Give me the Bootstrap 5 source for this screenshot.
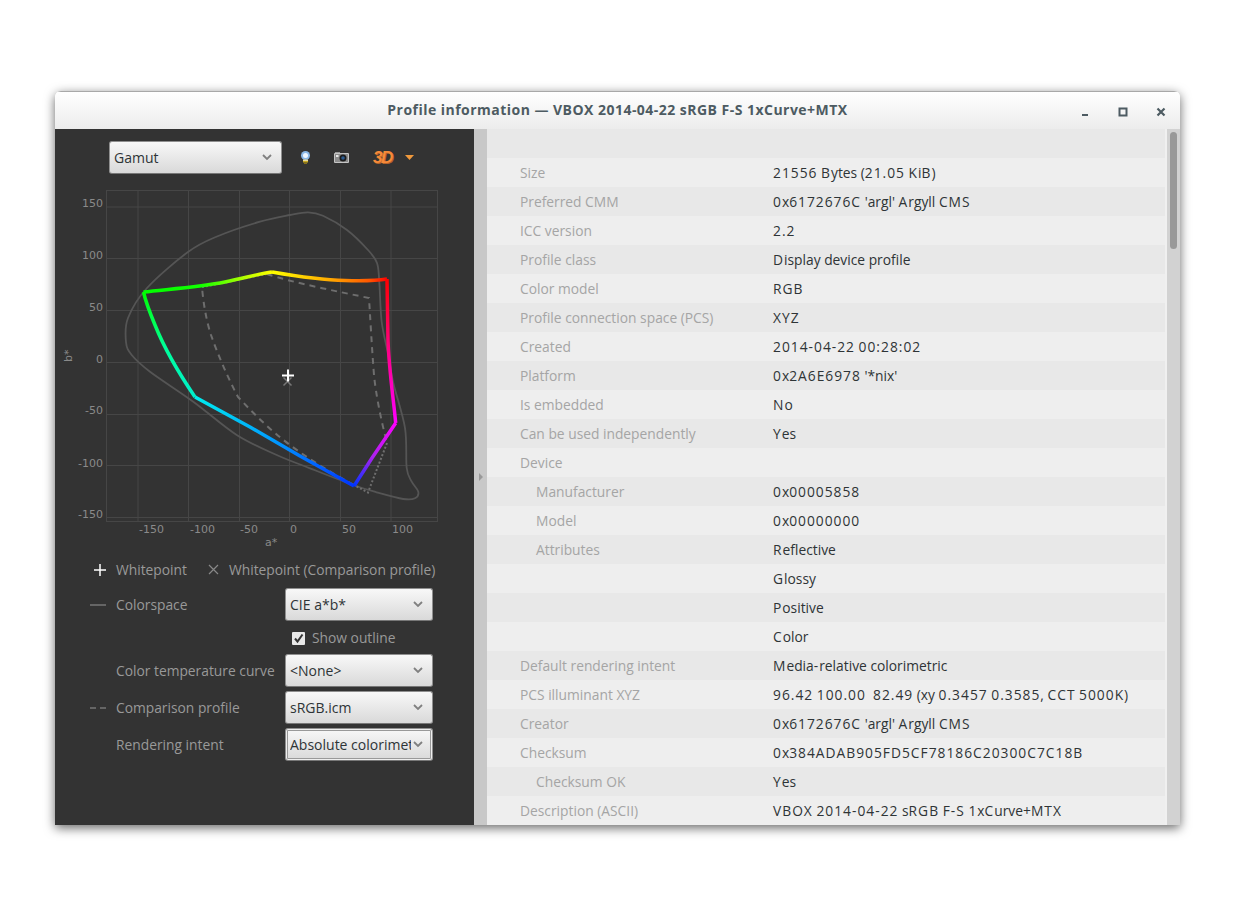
<!DOCTYPE html>
<html lang="en">
<head>
  <meta charset="UTF-8">
  <title>Profile information</title>
  <link href="https://cdn.jsdelivr.net/npm/bootstrap@5.3.3/dist/css/bootstrap.min.css" rel="stylesheet">
  <style>
    body { background: #fff; font-family: "Open Sans", "Noto Sans", sans-serif; font-size: 13.8px; }
    .page-wrap { padding: 91px 56px 60px 55px; }
    .app-window { height: 734px; border-radius: 6px 6px 0 0; overflow: hidden; box-shadow: 0 3px 11px rgba(0,0,0,.6); }
    .title-bar { height: 38px; padding-bottom: 2px; background: linear-gradient(#fff, #ececec); border-top: 1px solid #a8a8a8; color: #4d5b62; font-size: 14px; font-weight: 700; letter-spacing: .47px; }
    .win-btns { width: 114px; padding-top: 2px; }
    .win-btn { width: 38px; }
    .left-panel { width: 419px; background: #333; color: #999; }
    .tool-row { height: 56px; padding: 12px 0 0 54px; }
    .tool-inner { height: 33px; }
    .gtk-select { height: 33px; padding: 0 26px 0 4px; font-size: 14px; color: #2e3436; border: 1px solid #8f8f8f; border-bottom-color: #777; border-radius: 3px;
      background-color: #e8e8e8; background-size: 10px 7px, 100% 100%; background-position: right 9px center, 0 0;
      background-image: url("data:image/svg+xml,%3Csvg xmlns='http://www.w3.org/2000/svg' viewBox='0 0 10 7'%3E%3Cpath d='M1 1l4 4 4-4' fill='none' stroke='%23808080' stroke-width='1.8'/%3E%3C/svg%3E"), linear-gradient(#f8f8f8, #d9d9d9); }
    .gtk-select.focused { padding-right: 21px; box-shadow: inset 0 0 0 1px #eee, inset 0 0 0 2px #999; }
    .gamut-select { width: 173px; }
    .bulb-icon { margin-left: 18px; }
    .cam-icon { margin-left: 23px; }
    .three-d { width: 16px; margin-left: 24px; font: italic 700 17px/1 "Liberation Sans", sans-serif; letter-spacing: -1.5px; color: #f58a3a; text-shadow: 1px 1px 0 #b5622a; white-space: nowrap; }
    .drop-arrow { margin-left: 16px; }
    .plot-svg { display: block; }
    .plot-svg text { font-family: "DejaVu Sans", sans-serif; font-size: 11px; fill: #8a8a8a; }
    .legend-row { padding: 0 0 3px 35px; height: 33px; }
    .mark-gap { margin-left: 20px; }
    .option-grid { display: grid; grid-template-columns: 26px 169px 148px; margin-left: 35px; row-gap: 4px; align-items: center; }
    .opt-label { padding-top: 2px; }
    .show-outline { min-height: 25px; padding: 1px 0 0 7px; gap: 7px; }
    .splitter { width: 13px; background: #c8c8c8; }
    .info-pane { background: #f0f0f0; }
    .info-table { width: 678px; margin: 0; table-layout: fixed; }
    .info-table td { height: 29px; padding: 2px 0 0; border: 0; white-space: pre; }
    .info-table tr:nth-child(odd) td { background: #e8e8e8; }
    .info-table tr:nth-child(even) td { background: #eee; }
    .cell-name { width: 286px; padding-left: 33px !important; color: #a5a5a5; }
    .cell-name.sub { padding-left: 49px !important; }
    .cell-val { color: #2e3436; }
    .wide-run { letter-spacing: 1px; }
    .scroll-track { width: 13px; background: #d2d2d2; margin-left: 2px; padding: 3px 3px; }
    .scroll-thumb { height: 117px; background: #999; border-radius: 4px; }
  </style>
</head>
<body>
  <div class="page-wrap">
    <div class="app-window d-flex flex-column">
      <div class="title-bar d-flex align-items-center flex-shrink-0">
        <div class="win-btns flex-shrink-0"></div>
        <div class="flex-grow-1 text-center">Profile information — VBOX 2014-04-22 sRGB F-S 1xCurve+MTX</div>
        <div class="win-btns d-flex flex-shrink-0">
          <div class="win-btn text-center"><svg width="10" height="10" viewBox="0 0 10 10"><path d="M2 8h6" stroke="#4d5b62" stroke-width="2"/></svg></div>
          <div class="win-btn text-center"><svg width="10" height="10" viewBox="0 0 10 10"><rect x="1.5" y="1.5" width="7" height="7" fill="none" stroke="#4d5b62" stroke-width="2"/></svg></div>
          <div class="win-btn text-center"><svg width="10" height="10" viewBox="0 0 10 10"><path d="M1.5 1.5l7 7M8.500 1.5l-7 7" stroke="#4d5b62" stroke-width="2.200"/></svg></div>
        </div>
      </div>
      <div class="d-flex flex-grow-1 overflow-hidden">
        <!-- Left: gamut plot and options -->
        <div class="left-panel flex-shrink-0">
          <div class="tool-row">
            <div class="tool-inner d-flex align-items-center">
              <select class="form-select gtk-select gamut-select flex-shrink-0"><option>Gamut</option></select>
              <svg class="bulb-icon flex-shrink-0" width="11" height="13" viewBox="0 0 11 13">
                <circle cx="5.500" cy="4.500" r="4.500" fill="#8ab8e8"/>
                <circle cx="5.500" cy="4.500" r="2.500" fill="#eef6ff"/>
                <rect x="3" y="8.500" width="5" height="1.500" fill="#e8dca0"/>
                <rect x="3" y="10" width="5" height="1.500" fill="#c8a820"/>
                <rect x="4" y="11.500" width="3" height="1.500" fill="#8a7418"/>
              </svg>
              <svg class="cam-icon flex-shrink-0" width="15" height="11" viewBox="0 0 15 11">
                <rect x="1" y="0" width="5" height="2" fill="#999"/>
                <rect x="0" y="1" width="15" height="10" rx="1" fill="#c4c4c4"/>
                <rect x="1" y="2" width="13" height="8" fill="#8c8c8c"/>
                <circle cx="9" cy="6" r="3.500" fill="#1c1c1c"/>
                <circle cx="9" cy="6" r="1.800" fill="#2a5a90"/>
                <rect x="2" y="3" width="2.500" height="2" fill="#e8e8e8"/>
              </svg>
              <span class="three-d flex-shrink-0">3D</span>
              <svg class="drop-arrow flex-shrink-0" width="9" height="5" viewBox="0 0 9 5"><path d="M0 0h9L4.500 5z" fill="#f0993c"/></svg>
            </div>
          </div>
          <svg class="plot-svg" width="419" height="370" viewBox="55 185 419 370">
            <defs>
              <linearGradient id="gY" gradientUnits="userSpaceOnUse" x1="143" y1="292" x2="272" y2="272"><stop offset="0" stop-color="#0f0"/><stop offset=".45" stop-color="#1f0"/><stop offset=".8" stop-color="#bf0"/><stop offset="1" stop-color="#ff0"/></linearGradient>
              <linearGradient id="yR" gradientUnits="userSpaceOnUse" x1="272" y1="272" x2="387" y2="279"><stop offset="0" stop-color="#ff0"/><stop offset=".5" stop-color="#fa0"/><stop offset=".85" stop-color="#f50"/><stop offset="1" stop-color="#f00"/></linearGradient>
              <linearGradient id="rM" gradientUnits="userSpaceOnUse" x1="387" y1="279" x2="396" y2="423"><stop offset="0" stop-color="#f00"/><stop offset=".5" stop-color="#f08"/><stop offset="1" stop-color="#f0f"/></linearGradient>
              <linearGradient id="mB" gradientUnits="userSpaceOnUse" x1="396" y1="423" x2="354" y2="486"><stop offset="0" stop-color="#f0f"/><stop offset=".55" stop-color="#a2e"/><stop offset="1" stop-color="#03f"/></linearGradient>
              <linearGradient id="bC" gradientUnits="userSpaceOnUse" x1="354" y1="486" x2="195" y2="397"><stop offset="0" stop-color="#03f"/><stop offset=".5" stop-color="#09f"/><stop offset="1" stop-color="#0ee"/></linearGradient>
              <linearGradient id="cG" gradientUnits="userSpaceOnUse" x1="195" y1="397" x2="143" y2="292"><stop offset="0" stop-color="#0ec"/><stop offset=".5" stop-color="#0f9"/><stop offset="1" stop-color="#0f0"/></linearGradient>
            </defs>
            <g stroke="#464646" stroke-width="1" fill="none">
              <rect x="106.500" y="190.500" width="331" height="331"/>
              <path d="M138 190v331M188.500 190v331M239.500 190v331M289.500 190v331M340.500 190v331M391 190v331"/>
              <path d="M106 207h332M106 258.500h332M106 310.500h332M106 362.500h332M106 414.500h332M106 465.500h332M106 517.500h332"/>
            </g>
            <g text-anchor="end">
              <text x="103" y="207">150</text><text x="103" y="259">100</text><text x="103" y="311">50</text>
              <text x="103" y="363">0</text><text x="103" y="414">-50</text><text x="103" y="467">-100</text><text x="103" y="518">-150</text>
            </g>
            <g>
              <text x="139" y="533">-150</text><text x="190" y="533">-100</text><text x="240" y="533">-50</text>
              <text x="290" y="533">0</text><text x="342" y="533">50</text><text x="392" y="533">100</text>
              <text x="265" y="546">a*</text>
              <text transform="translate(72 362) rotate(-90)">b*</text>
            </g>
            <path id="outline" fill="none" stroke="#555" stroke-width="1.800"/>
            <g fill="none" stroke="#6e6e6e" stroke-width="2">
              <path stroke-dasharray="6 5" d="M267 274C290 282 340 292 369 298C371 330 372 350 374 375C376 395 381 420 387 443"/>
              <path stroke-dasharray="2 2" d="M387 443L368 492.500L354 485"/>
              <path stroke-dasharray="6 5" d="M354 485C330 472 310 460 290 445C270 430 255 415 238 397C228 378 218 355 211 335C206 320 203 300 202 287"/>
              <path stroke-dasharray="2 2" d="M202 287C225 283 250 277 267 274"/>
            </g>
            <g fill="none" stroke-width="3.500" stroke-linejoin="round">
              <path stroke="url(#gY)" d="M143.500 292C170 289 200 287 225 282C245 278 258 274 272 272"/>
              <path stroke="url(#yR)" d="M272 272C295 276 320 280 345 280.500C362 281 375 281 387 279"/>
              <path stroke="url(#rM)" d="M387 279L388 340C389 370 393 395 395.700 423"/>
              <path stroke="url(#mB)" d="M395.700 423L372 458L354 486"/>
              <path stroke="url(#bC)" d="M354 486L300 456L250 427L195 397"/>
              <path stroke="url(#cG)" d="M195 397C178 372 163 345 155 325C150 313 146 303 143.500 292"/>
            </g>
            <path d="M283.500 377.500l8 8M291.500 377.500l-8 8" stroke="#777" stroke-width="1.500"/>
            <path d="M282 375.500h12M288 369.500v12" stroke="#fff" stroke-width="2"/>
          </svg>
          <div class="legend-row d-flex align-items-center">
            <svg class="me-2" width="18" height="14" viewBox="0 0 18 14"><path d="M4 7h12M10 1v12" stroke="#fff" stroke-width="1.500"/></svg>
            <span>Whitepoint</span>
            <svg class="mark-gap me-2" width="14" height="14" viewBox="0 0 14 14"><path d="M2 2l9 9M11 2l-9 9" stroke="#888" stroke-width="1.200"/></svg>
            <span>Whitepoint (Comparison profile)</span>
          </div>
          <div class="option-grid">
            <svg width="16" height="4" viewBox="0 0 16 4"><path d="M0 2h16" stroke="#777" stroke-width="1.500"/></svg>
            <span class="opt-label">Colorspace</span>
            <select class="form-select gtk-select"><option>CIE a*b*</option></select>

            <span></span><span></span>
            <div class="show-outline d-flex align-items-center">
              <svg width="13" height="13" viewBox="0 0 13 13"><rect width="13" height="13" rx="1" fill="#e8e8e8"/><path d="M3 6.500l2.500 3 5-7" fill="none" stroke="#333" stroke-width="2"/></svg>
              <span>Show outline</span>
            </div>

            <span></span>
            <span class="opt-label">Color temperature curve</span>
            <select class="form-select gtk-select"><option>&lt;None&gt;</option></select>

            <svg width="16" height="4" viewBox="0 0 16 4"><path d="M0 2h6M10 2h6" stroke="#777" stroke-width="1.500"/></svg>
            <span class="opt-label">Comparison profile</span>
            <select class="form-select gtk-select"><option>sRGB.icm</option></select>

            <span></span>
            <span class="opt-label">Rendering intent</span>
            <select class="form-select gtk-select focused"><option>Absolute colorimetric</option></select>
          </div>
        </div>
        <div class="splitter flex-shrink-0 d-flex align-items-center justify-content-end pe-1">
          <svg width="4" height="8" viewBox="0 0 4 8"><path d="M0 0l4 4-4 4z" fill="#999"/></svg>
        </div>
        <!-- Right: profile details -->
        <div class="info-pane flex-grow-1 d-flex overflow-hidden">
          <table class="info-table flex-shrink-0">
            <tbody id="info-rows"></tbody>
          </table>
          <div class="scroll-track flex-shrink-0"><div class="scroll-thumb"></div></div>
        </div>
      </div>
    </div>
  </div>
  <script>
    // name, value, indented
    const rows = [
      ["", ""],
      ["Size", "21556 Bytes (21.05 KiB)"],
      ["Preferred CMM", "0x6172676C 'argl' Argyll CMS"],
      ["ICC version", "2.2"],
      ["Profile class", "Display device profile"],
      ["Color model", "RGB"],
      ["Profile connection space (PCS)", "XYZ"],
      ["Created", "2014-04-22 00:28:02"],
      ["Platform", "0x2A6E6978 '*nix'"],
      ["Is embedded", "No"],
      ["Can be used independently", "Yes"],
      ["Device", ""],
      ["Manufacturer", "0x00005858", 1],
      ["Model", "0x00000000", 1],
      ["Attributes", "Reflective", 1],
      ["", "Glossy"],
      ["", "Positive"],
      ["", "Color"],
      ["Default rendering intent", "Media-relative colorimetric"],
      ["PCS illuminant XYZ", "96.42 100.00  82.49 (xy 0.3457 0.3585, CCT 5000K)"],
      ["Creator", "0x6172676C 'argl' Argyll CMS"],
      ["Checksum", "0x384ADAB905FD5CF78186C20300C7C18B"],
      ["Checksum OK", "Yes", 1],
      ["Description (ASCII)", "VBOX 2014-04-22 sRGB F-S 1xCurve+MTX"]
    ];
    const body = document.getElementById("info-rows");
    rows.forEach(r => {
      const tr = document.createElement("tr");
      const a = document.createElement("td");
      a.className = "cell-name" + (r[2] ? " sub" : "");
      a.textContent = r[0];
      const b = document.createElement("td");
      b.className = "cell-val";
      // digits and capitals run wider in the original font
      r[1].split(/([0-9A-Z.:\-]+)/).forEach((part, i) => {
        const s = document.createElement("span");
        if (i % 2) s.className = "wide-run";
        s.textContent = part;
        b.appendChild(s);
      });
      tr.append(a, b);
      body.appendChild(tr);
    });

    // Visible-colour outline, smoothed through measured points
    const pts = [[126,342],[128,318],[147,288],[188,252],[217,236.5],[260,221.7],[290,215],[308,212.3],[323,215.7],[347,230],[368,250],[377,263],[379.3,282],[381.7,322],[388.3,355],[393.3,383],[405,428],[406.7,468],[411.7,481.7],[418.3,491.7],[415,498.3],[403.3,499],[376.7,492.3],[353.3,485],[310,468.3],[276.7,455],[236.7,435],[193.3,401.7],[150,371.7],[131.7,355]];
    let d = `M${pts[0]}`;
    for (let i = 0; i < pts.length; i++) {
      const p0 = pts[(i - 1 + pts.length) % pts.length], p1 = pts[i];
      const p2 = pts[(i + 1) % pts.length], p3 = pts[(i + 2) % pts.length];
      const c1 = [p1[0] + (p2[0] - p0[0]) / 6, p1[1] + (p2[1] - p0[1]) / 6];
      const c2 = [p2[0] - (p3[0] - p1[0]) / 6, p2[1] - (p3[1] - p1[1]) / 6];
      d += `C${c1} ${c2} ${p2}`;
    }
    document.getElementById("outline").setAttribute("d", d);
  </script>
  <script src="https://cdn.jsdelivr.net/npm/bootstrap@5.3.3/dist/js/bootstrap.bundle.min.js"></script>
</body>
</html>
